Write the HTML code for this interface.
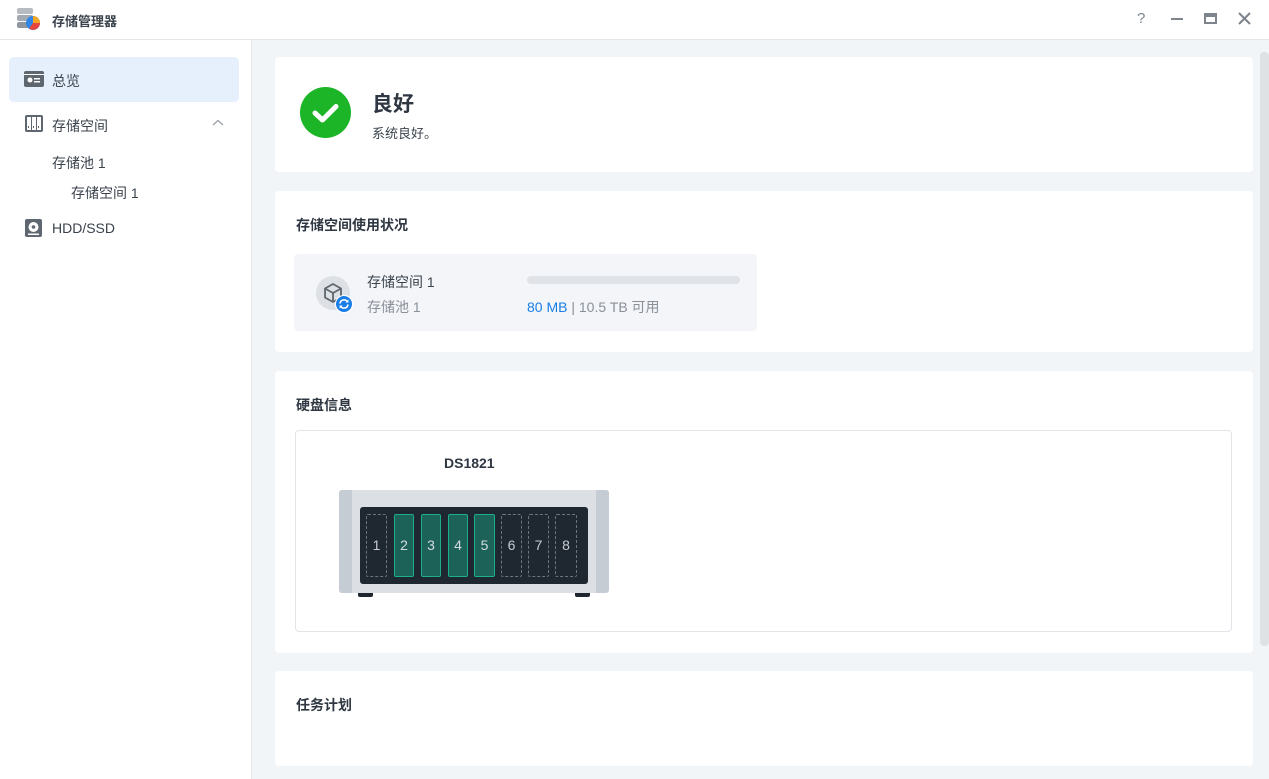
<!DOCTYPE html>
<html><head><meta charset="utf-8"><style>
*{box-sizing:border-box;margin:0;padding:0}
body{width:1269px;height:779px;overflow:hidden;background:#fff;font-family:"Liberation Sans","Noto Sans CJK SC",sans-serif;color:#3b434d;position:relative}
.abs{position:absolute}
.title{left:0;top:0;width:1269px;height:40px;border-bottom:1px solid #e3e6ea;background:#fff}
.side{left:0;top:40px;width:252px;height:739px;background:#fff;border-right:1px solid #e6e9ed}
.main{left:252px;top:40px;width:1017px;height:739px;background:#f2f5f8}
.card{position:absolute;left:23px;width:978px;background:#fff;border-radius:4px}
.h{position:absolute;left:21px;font-size:14px;font-weight:bold;color:#2f3742}
.navt{position:absolute;font-size:14px;color:#3b434d}
</style></head><body>
<div class="abs title">
  <svg class="abs" style="left:16px;top:6px" width="26" height="26" viewBox="0 0 26 26">
    <rect x="1" y="2" width="16" height="6" rx="2" fill="#b7bcc2"/><rect x="1" y="9" width="16" height="6" rx="2" fill="#a3a9b0"/><rect x="1" y="16" width="16" height="6" rx="2" fill="#8f969e"/>
    <circle cx="17" cy="17" r="7" fill="#2f86e6"/><path d="M17 17 L17 10 A7 7 0 0 1 24 17Z" fill="#f6a623"/><path d="M17 17 L24 17 A7 7 0 0 1 13 22.6Z" fill="#e8453c"/>
  </svg>
  <div class="abs" style="left:52px;top:11px;font-size:13px;font-weight:bold;color:#3b434d">存储管理器</div>
  <div class="abs" style="left:1137px;top:10px;font-size:15px;color:#7d848c">?</div>
  <div class="abs" style="left:1171px;top:18px;width:12px;height:2px;background:#7d848c"></div>
  <div class="abs" style="left:1204px;top:13px;width:13px;height:11px;border:2px solid #7d848c;border-top-width:4px"></div>
  <svg class="abs" style="left:1238px;top:12px" width="13" height="13"><path d="M1 1L12 12M12 1L1 12" stroke="#7d848c" stroke-width="2"/></svg>
</div>
<div class="abs side">
  <div class="abs" style="left:9px;top:17px;width:230px;height:45px;background:#e5f0fc;border-radius:5px"></div>
  <svg class="abs" style="left:24px;top:31px" width="20" height="16"><rect x="0" y="0" width="20" height="16" rx="2" fill="#5e666f"/><rect x="1.5" y="4" width="17" height="10.5" fill="#5e666f"/><rect x="0" y="3" width="20" height="1" fill="#fff"/><circle cx="6" cy="9" r="2.5" fill="#fff"/><rect x="10" y="7" width="6" height="1.5" fill="#fff"/><rect x="10" y="10" width="6" height="1.5" fill="#fff"/></svg>
  <div class="navt" style="left:52px;top:31px">总览</div>
  <svg class="abs" style="left:25px;top:75px" width="18" height="17"><rect x="0" y="0" width="18" height="17" rx="2" fill="#5e666f"/><rect x="2" y="2" width="4" height="13" fill="#fff"/><rect x="7" y="2" width="4" height="13" fill="#fff"/><rect x="12" y="2" width="4" height="13" fill="#fff"/><rect x="3" y="11" width="1" height="2" fill="#5e666f"/><rect x="8" y="11" width="1" height="2" fill="#5e666f"/><rect x="13" y="11" width="1" height="2" fill="#5e666f"/></svg>
  <div class="navt" style="left:52px;top:76px">存储空间</div>
  <svg class="abs" style="left:212px;top:79px" width="12" height="8"><path d="M1 6L6 1.5L11 6" stroke="#9aa0a7" stroke-width="1.3" fill="none"/></svg>
  <div class="navt" style="left:52px;top:113px">存储池 1</div>
  <div class="navt" style="left:71px;top:143px">存储空间 1</div>
  <svg class="abs" style="left:25px;top:179px" width="17" height="18"><rect x="0" y="0" width="17" height="18" rx="2" fill="#5e666f"/><circle cx="8.5" cy="8" r="5" fill="#fff"/><circle cx="8.5" cy="8" r="1.8" fill="#5e666f"/><rect x="3" y="14.5" width="11" height="1.5" fill="#fff"/></svg>
  <div class="navt" style="left:52px;top:180px">HDD/SSD</div>
</div>
<div class="abs main">
  <div class="card" style="top:17px;height:115px">
    <svg class="abs" style="left:25px;top:30px" width="51" height="51"><circle cx="25.5" cy="25.5" r="25.5" fill="#1bb527"/><path d="M15 26L22.5 33L36 19.5" stroke="#fff" stroke-width="5" stroke-linecap="round" stroke-linejoin="round" fill="none"/></svg>
    <div class="abs" style="left:97px;top:31px;font-size:21px;font-weight:bold;color:#2f3742">良好</div>
    <div class="abs" style="left:97px;top:66px;font-size:13px;color:#3b434d">系统良好。</div>
  </div>
  <div class="card" style="top:151px;height:161px">
    <div class="h" style="top:24px">存储空间使用状况</div>
    <div class="abs" style="left:19px;top:63px;width:463px;height:77px;background:#f3f5f8;border-radius:4px">
      <div class="abs" style="left:22px;top:22px;width:34px;height:34px;border-radius:50%;background:#dde1e6"></div>
      <svg class="abs" style="left:29px;top:28px" width="20" height="22" viewBox="0 0 20 22"><path d="M10 2L18 6.5V15.5L10 20L2 15.5V6.5Z M2 6.5L10 11L18 6.5 M10 11V20" stroke="#5e666f" stroke-width="1.8" fill="none" stroke-linejoin="round"/></svg>
      <svg class="abs" style="left:41px;top:41px" width="18" height="18"><circle cx="9" cy="9" r="8.5" fill="#1a7ee6" stroke="#fff" stroke-width="1"/><path d="M5 8.5A4 4 0 0 1 12.5 7M13 9.5A4 4 0 0 1 5.5 11" stroke="#fff" stroke-width="1.6" fill="none"/><path d="M13.5 4.5V7.5H10.5Z M4.5 13.5V10.5H7.5Z" fill="#fff"/></svg>
      <div class="abs" style="left:73px;top:18px;font-size:14px;color:#3b434d">存储空间 1</div>
      <div class="abs" style="left:73px;top:43px;font-size:14px;color:#8a9098">存储池 1</div>
      <div class="abs" style="left:233px;top:22px;width:213px;height:8px;border-radius:4px;background:#dfe2e7"></div>
      <div class="abs" style="left:233px;top:43px;font-size:14px;color:#8a9098"><span style="color:#1a7ee6">80 MB</span> | 10.5 TB 可用</div>
    </div>
  </div>
  <div class="card" style="top:331px;height:282px">
    <div class="h" style="top:24px">硬盘信息</div>
    <div class="abs" style="left:20px;top:59px;width:937px;height:202px;border:1px solid #e1e4e8;border-radius:4px">
      <div class="abs" style="left:148px;top:24px;font-size:14px;font-weight:bold;color:#2f3742">DS1821</div>
      <div class="abs" style="left:62px;top:161px;width:15px;height:5px;background:#1f2630;border-radius:0 0 2px 2px"></div>
      <div class="abs" style="left:279px;top:161px;width:15px;height:5px;background:#1f2630;border-radius:0 0 2px 2px"></div>
      <div class="abs" style="left:43px;top:59px;width:270px;height:103px;background:#dcdfe3;border-radius:3px"></div>
      <div class="abs" style="left:43px;top:59px;width:13px;height:103px;background:#c5ccd4;border-radius:3px 0 0 3px"></div>
      <div class="abs" style="left:300px;top:59px;width:13px;height:103px;background:#c5ccd4;border-radius:0 3px 3px 0"></div>
      <div class="abs" style="left:64px;top:76px;width:228px;height:77px;background:#1f2730;border-radius:3px"></div>
      <div class="abs" style="left:70px;top:83px;width:21px;height:63px;border:1px dashed #6d747c;border-radius:2px;color:#c8ccd1;font-size:14px;text-align:center;line-height:61px">1</div>
      <div class="abs" style="left:98px;top:83px;width:20px;height:63px;border:1px solid #19b08e;background:#1c6259;border-radius:2px;color:#d5dbe0;font-size:14px;text-align:center;line-height:61px">2</div>
      <div class="abs" style="left:125px;top:83px;width:20px;height:63px;border:1px solid #19b08e;background:#1c6259;border-radius:2px;color:#d5dbe0;font-size:14px;text-align:center;line-height:61px">3</div>
      <div class="abs" style="left:152px;top:83px;width:20px;height:63px;border:1px solid #19b08e;background:#1c6259;border-radius:2px;color:#d5dbe0;font-size:14px;text-align:center;line-height:61px">4</div>
      <div class="abs" style="left:178px;top:83px;width:21px;height:63px;border:1px solid #19b08e;background:#1c6259;border-radius:2px;color:#d5dbe0;font-size:14px;text-align:center;line-height:61px">5</div>
      <div class="abs" style="left:205px;top:83px;width:21px;height:63px;border:1px dashed #6d747c;border-radius:2px;color:#c8ccd1;font-size:14px;text-align:center;line-height:61px">6</div>
      <div class="abs" style="left:232px;top:83px;width:21px;height:63px;border:1px dashed #6d747c;border-radius:2px;color:#c8ccd1;font-size:14px;text-align:center;line-height:61px">7</div>
      <div class="abs" style="left:259px;top:83px;width:22px;height:63px;border:1px dashed #6d747c;border-radius:2px;color:#c8ccd1;font-size:14px;text-align:center;line-height:61px">8</div>
    </div>
  </div>
  <div class="card" style="top:631px;height:95px">
    <div class="h" style="top:24px">任务计划</div>
  </div>
  <div class="abs" style="left:1008px;top:12px;width:9px;height:594px;background:#dfe2e5;border-radius:4px"></div>
</div>
</body></html>
